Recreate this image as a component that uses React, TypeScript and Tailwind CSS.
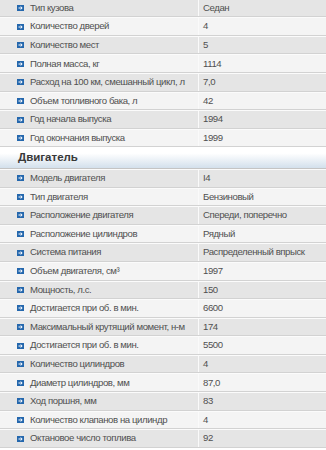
import React from "react";

const top: [string, string][] = [
  ["Тип кузова", "Седан"],
  ["Количество дверей", "4"],
  ["Количество мест", "5"],
  ["Полная масса, кг", "1114"],
  ["Расход на 100 км, смешанный цикл, л", "7,0"],
  ["Объем топливного бака, л", "42"],
  ["Год начала выпуска", "1994"],
  ["Год окончания выпуска", "1999"],
];

const engine: [string, string][] = [
  ["Модель двигателя", "I4"],
  ["Тип двигателя", "Бензиновый"],
  ["Расположение двигателя", "Спереди, поперечно"],
  ["Расположение цилиндров", "Рядный"],
  ["Система питания", "Распределенный впрыск"],
  ["Объем двигателя, см³", "1997"],
  ["Мощность, л.с.", "150"],
  ["Достигается при об. в мин.", "6600"],
  ["Максимальный крутящий момент, н-м", "174"],
  ["Достигается при об. в мин.", "5500"],
  ["Количество цилиндров", "4"],
  ["Диаметр цилиндров, мм", "87,0"],
  ["Ход поршня, мм", "83"],
  ["Количество клапанов на цилиндр", "4"],
  ["Октановое число топлива", "92"],
];

function Icon() {
  return (
    <svg width="7" height="6" viewBox="0 0 7 6" className="shrink-0">
      <rect width="7" height="6" fill="#2467ad" />
      <path d="M1.5 3H5M3.6 1.5L5.2 3L3.6 4.5" stroke="#fff" strokeWidth="1" fill="none" />
    </svg>
  );
}

function Row({ label, value, odd }: { label: string; value: string; odd: boolean }) {
  return (
    <div
      className={`flex h-[18.6px] border-t border-b border-t-[#fbfbfb] border-b-[#d2d2d2] ${
        odd ? "bg-[#e5e5e5]" : "bg-[#f4f4f4]"
      }`}
    >
      <div className="w-[198px] shrink-0 flex items-center pl-[17px] gap-[6px] whitespace-nowrap">
        <Icon />
        <span>{label}</span>
      </div>
      <div className="w-px bg-[#fafafa]" />
      <div className="flex-1 flex items-center pl-[4px] whitespace-nowrap">{value}</div>
    </div>
  );
}

export default function App() {
  return (
    <div
      className="w-[326px] h-[450px] overflow-hidden bg-white text-[#505050] text-[9.6px] tracking-[-0.42px]"
      style={{ fontFamily: '"Liberation Sans", Arial, sans-serif' }}
    >
      <div className="-mt-[1.3px]">
        {top.map(([l, v], i) => (
          <Row key={i} label={l} value={v} odd={i % 2 === 0} />
        ))}
        <div className="h-[21.5px] flex items-center pl-[18px] font-bold text-[11.5px] tracking-normal text-[#383838] bg-gradient-to-b from-white from-30% to-[#d3e0ec] border-b border-[#c4c4c4]">
          Двигатель
        </div>
        {engine.map(([l, v], i) => (
          <Row key={i} label={l} value={v} odd={i % 2 === 0} />
        ))}
      </div>
    </div>
  );
}
